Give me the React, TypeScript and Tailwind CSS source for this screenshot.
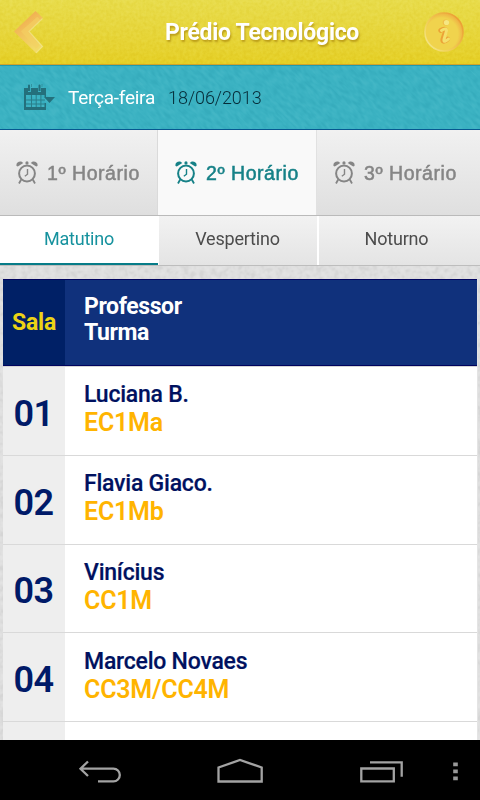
import React from "react";

const roboto = "font-[Roboto,'Liberation_Sans',sans-serif]";

function Texture({ id, freq, opacity, rotate }: { id: string; freq: string; opacity: string; rotate?: boolean }) {
  return (
    <svg className={`pointer-events-none absolute inset-0 h-full w-full mix-blend-soft-light ${opacity}`} aria-hidden="true">
      <defs>
        <filter id={id} x="0" y="0" width="100%" height="100%" colorInterpolationFilters="sRGB">
          <feTurbulence type="fractalNoise" baseFrequency={freq} numOctaves={2} seed={4} />
          <feColorMatrix values="2 0 0 0 -0.5  2 0 0 0 -0.5  2 0 0 0 -0.5  0 0 0 0 1" />
        </filter>
      </defs>
      {rotate ? (
        <g transform="rotate(45)">
          <rect x="-100" y="-420" width="800" height="820" filter={`url(#${id})`} />
        </g>
      ) : (
        <rect width="100%" height="100%" filter={`url(#${id})`} />
      )}
    </svg>
  );
}

function BackChevron() {
  return (
    <svg className="relative" width="32" height="46" viewBox="0 0 32 46">
      <defs>
        <linearGradient id="chev" x1="0" y1="0" x2="0.5" y2="1">
          <stop offset="0" stopColor="#f09c45" />
          <stop offset="0.5" stopColor="#f2bf5a" />
          <stop offset="1" stopColor="#f2da68" />
        </linearGradient>
      </defs>
      <path d="M21.500 2 29 9 15 22.500 29 37.500 22 44 0 22.500z" fill="url(#chev)" />
      <path d="M25 9.500 10.500 22.500 24 38" fill="none" stroke="#f3d163" strokeWidth="5" opacity=".6" />
      <path d="M28.500 9.500 15 22.500 28.500 37.500 22 44" fill="none" stroke="#f4eb94" strokeWidth="1.200" opacity=".6" />
    </svg>
  );
}

function InfoIcon() {
  return (
    <svg className="relative" width="42" height="42" viewBox="0 0 42 42">
      <defs>
        <linearGradient id="ring" x1="0" y1="1" x2="1" y2="0.2">
          <stop offset="0" stopColor="#f5ed9c" />
          <stop offset="0.35" stopColor="#f1d45d" />
          <stop offset="1" stopColor="#ec9a30" />
        </linearGradient>
        <radialGradient id="disc" cx="0.44" cy="0.56" r="0.58">
          <stop offset="0.74" stopColor="#f0d34d" />
          <stop offset="1" stopColor="#efac43" />
        </radialGradient>
      </defs>
      <circle cx="21" cy="21" r="19" fill="url(#disc)" stroke="url(#ring)" strokeWidth="1.600" />
      <g strokeLinecap="round" strokeLinejoin="round">
        <circle cx="22.700" cy="11.500" r="3" fill="#efbd49" />
        <circle cx="23.500" cy="11.500" r="2.600" fill="#f5e783" />
        <path d="M17.500 19.500c3-2 5.500-2 5 .5l-2.800 8.500c-.6 3 2.500 2 5-.5" fill="none" stroke="#eca337" strokeWidth="4.600" />
        <path d="M18.500 19.500c3-2 5.500-2 5 .5l-2.500 8.500c-.6 3 2 1.800 4.500-.5" fill="none" stroke="#f4e06c" strokeWidth="3" />
      </g>
    </svg>
  );
}

function CalendarIcon() {
  return (
    <svg className="relative" width="32" height="27" viewBox="0 0 32 27" fill="#24707c">
      <path d="M0 4h4v4h3V4h7v4h3V4h5v9h-1.500v-2H2v12h18.500v-4H22v7H0z" />
      <path d="M4 1.500a1 1 0 0 1 2 0V7H4zM14.500 1.500a1 1 0 0 1 2 0V7h-2z" />
      <path d="M7 0h1v3H7zM17.500 0h1v3h-1z" opacity=".5" />
      <path d="M2 15.500h19v1H2zM2 19.500h18.500v1H2zM7 10h1v14H7zM11.700 10h1v14h-1zM16.400 10h1v14h-1z" opacity=".8" />
      <path d="M20 13h11l-5.500 6z" />
    </svg>
  );
}

function AlarmIcon() {
  return (
    <svg width="22" height="23" viewBox="0 0 22 23" fill="none" stroke="currentColor">
      <circle cx="11" cy="12.500" r="7.900" strokeWidth="2" />
      <path d="M11.500 8v5.200L8.800 15.200" strokeWidth="1.400" />
      <path d="M5.200 18.500 3 22.500M16.800 18.500 19 22.500" strokeWidth="1.800" />
      <g fill="currentColor" stroke="none">
        <path d="M.6 4.900C-.5 2.500 2.800-.3 6 .9L7.300 2 1.800 5.600z" />
        <path d="M21.400 4.900c1.100-2.400-2.200-5.200-5.400-4L14.700 2l5.500 3.600z" />
        <circle cx="11" cy="1.900" r="1.600" />
      </g>
    </svg>
  );
}

const periods = [
  { label: "1º Horário", style: "w-[158px] pl-4 border-r border-[#dadada] bg-linear-to-b from-[#f1f1f1] to-[#dfdfdf] text-[#858585]" },
  { label: "2º Horário", style: "w-[158px] pl-[17px] bg-[#f9f9f9] text-[#168187]" },
  { label: "3º Horário", style: "w-[164px] pl-4 border-l border-[#e1e1e1] bg-linear-to-b from-[#f1f1f1] to-[#dfdfdf] text-[#858585]" },
];

const rooms = [
  { room: "01", teacher: "Luciana B.", group: "EC1Ma", height: "h-[89px]", top: "pt-[14px]" },
  { room: "02", teacher: "Flavia Giaco.", group: "EC1Mb", height: "h-[89px]", top: "pt-[14px]" },
  { room: "03", teacher: "Vinícius", group: "CC1M", height: "h-[88px]", top: "pt-[14px]" },
  { room: "04", teacher: "Marcelo Novaes", group: "CC3M/CC4M", height: "h-[89px]", top: "pt-[15px]" },
];

export default function App() {
  return (
    <div className={`flex h-[800px] w-[480px] flex-col overflow-hidden bg-[#dedede] ${roboto}`}>
      <header className="relative flex h-[65px] shrink-0 items-center border-b border-[#cfa32b] bg-linear-to-b from-[#e8dc4b] to-[#e5cf24] pl-[14px] pr-[15px]">
        <Texture id="paper" freq="0.3" opacity="opacity-[0.14]" />
        <BackChevron />
        <h1 className="relative grow pt-[2px] pl-[55px] text-center text-[23px] leading-7 font-bold tracking-[-0.29px] text-white [text-shadow:1px_2px_2px_rgba(150,110,0,0.55)]">
          Prédio Tecnológico
        </h1>
        <InfoIcon />
      </header>

      <div className="relative flex h-[65px] shrink-0 items-center border-t border-b border-t-[#219bac] border-b-[#075790] bg-[#3bb2c2] pl-6">
        <Texture id="cloth" freq="0.12 0.32" opacity="opacity-[0.12]" rotate />
        <CalendarIcon />
        <span className="relative ml-3 pt-px text-[19px] tracking-[-0.25px] text-white">Terça-feira</span>
        <span className="relative ml-[13px] text-[18px] font-light tracking-[-0.06px] text-[#062c38]">18/06/2013</span>
      </div>

      <nav className="flex h-[86px] shrink-0 border-b border-[#bababa]">
        {periods.map((p) => (
          <div key={p.label} className={`flex items-center ${p.style}`}>
            <AlarmIcon />
            <span className="ml-[9px] pt-[3px] font-['Liberation_Sans',sans-serif] text-[19.5px] tracking-[0.55px] font-normal [-webkit-text-stroke:0.5px_currentColor]">
              {p.label}
            </span>
          </div>
        ))}
      </nav>

      <nav className="flex h-[50px] shrink-0 border-b border-[#bdbdbd] text-[18px] tracking-[-0.2px] text-[#4c4c4c]">
        <div className="flex w-[158px] items-center justify-center border-b-2 border-[#077c88] bg-white pb-[2px] text-[#16929e]">Matutino</div>
        <div className="flex w-[159px] items-center justify-center border-l border-white bg-linear-to-b from-[#f2f2f2] to-[#e4e4e4] pr-px pb-1">Vespertino</div>
        <div className="flex w-[163px] items-center justify-center border-l-2 border-white bg-linear-to-b from-[#f2f2f2] to-[#e4e4e4] pr-[6px] pb-1">Noturno</div>
      </nav>

      <main className="relative flex h-[474px] shrink-0 flex-col overflow-hidden px-[3px] pt-[13px]">
        <Texture id="stone" freq="0.18" opacity="opacity-[0.3]" />
        <div className="relative w-[475px] border-r border-[#e4e4e4] bg-white">
          <div className="flex h-[87px] border-t border-b border-[#00035e]">
            <div className="flex w-[62px] items-center justify-center bg-[#002066] pt-[2px] text-[23px] font-bold tracking-[-0.2px] text-[#ecd315]">Sala</div>
            <div className="grow bg-[#10317c] pt-[14px] pl-[19px] text-[23px] leading-[26px] font-bold tracking-[-0.4px] text-white">
              <div>Professor</div>
              <div>Turma</div>
            </div>
          </div>
          <div className="h-px bg-[#d5d5d5]" />
          {rooms.map((r) => (
            <div key={r.room} className={`flex border-b border-[#d9d9d9] ${r.height}`}>
              <div className="flex w-[62px] items-center justify-center bg-[#eee] pt-[5px] pr-px text-[36px] font-semibold tracking-[-0.5px] text-[#001a68]">
                {r.room}
              </div>
              <div className={`pl-[19px] ${r.top}`}>
                <div className="text-[23px] leading-7 font-medium tracking-[-0.22px] text-[#00115f] [-webkit-text-stroke:0.2px_currentColor]">{r.teacher}</div>
                <div className="text-[25px] leading-7 font-semibold tracking-[-0.22px] text-[#ffb400]">{r.group}</div>
              </div>
            </div>
          ))}
          <div className="h-5 w-[62px] bg-[#eee]" />
        </div>
      </main>

      <footer className="flex h-[60px] shrink-0 items-start bg-black">
        <svg width="480" height="60" viewBox="0 0 480 60" fill="none" stroke="#a3a3a3" strokeWidth="2.300">
          <path d="M88 21.500 80.500 28.700 88 36M81 28.700H113.500a6.300 6.300 0 0 1 0 12.600H98" />
          <path d="M218.500 41.500v-14L240 20l21.700 7.500v14z" />
          <path d="M361.300 28.500h32.500v12.800h-32.500zM370 22.300h31.700v14.500" />
          <path d="M453.200 22.500h4.600v3.800h-4.600zM453.200 29.500h4.600v3.800h-4.600zM453.200 36.500h4.600v3.800h-4.600z" fill="#999" stroke="none" />
        </svg>
      </footer>
    </div>
  );
}
